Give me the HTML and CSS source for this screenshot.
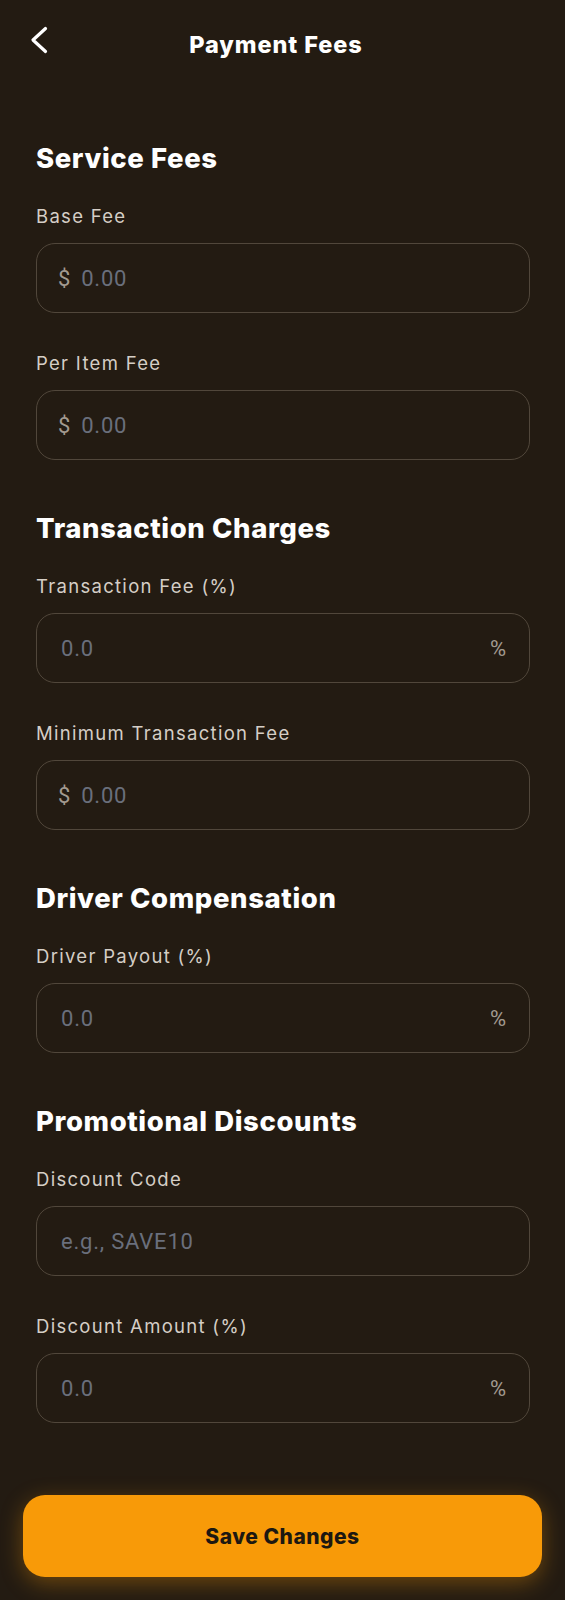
FILE: index.html
```html
<!DOCTYPE html>
<html lang="en">
<head>
<meta charset="utf-8">
<title>Payment Fees</title>
<link rel="stylesheet" href="styles.css">
</head>
<body>
<div class="screen">
  <header class="header">
    <button class="back" aria-label="Back">
      <svg width="20" height="30" viewBox="0 0 20 30"><path d="M15.5 3.5 L3 15 L15.5 26.5" fill="none" stroke="#ffffff" stroke-width="3.2" stroke-linecap="round" stroke-linejoin="round"/></svg>
    </button>
    <h1 class="title">Payment Fees</h1>
  </header>

  <main class="content">
    <section class="section">
      <h2 class="section-title">Service Fees</h2>
      <div class="fields">
        <div class="field">
          <label class="label">Base Fee</label>
          <div class="input input--prefix"><span class="affix">$</span><span class="placeholder">0.00</span></div>
        </div>
        <div class="field">
          <label class="label">Per Item Fee</label>
          <div class="input input--prefix"><span class="affix">$</span><span class="placeholder">0.00</span></div>
        </div>
      </div>
    </section>

    <section class="section">
      <h2 class="section-title">Transaction Charges</h2>
      <div class="fields">
        <div class="field">
          <label class="label">Transaction Fee (%)</label>
          <div class="input input--suffix"><span class="placeholder">0.0</span><span class="affix">%</span></div>
        </div>
        <div class="field">
          <label class="label">Minimum Transaction Fee</label>
          <div class="input input--prefix"><span class="affix">$</span><span class="placeholder">0.00</span></div>
        </div>
      </div>
    </section>

    <section class="section">
      <h2 class="section-title">Driver Compensation</h2>
      <div class="fields">
        <div class="field">
          <label class="label">Driver Payout (%)</label>
          <div class="input input--suffix"><span class="placeholder">0.0</span><span class="affix">%</span></div>
        </div>
      </div>
    </section>

    <section class="section">
      <h2 class="section-title">Promotional Discounts</h2>
      <div class="fields">
        <div class="field">
          <label class="label">Discount Code</label>
          <div class="input"><span class="placeholder">e.g., SAVE10</span></div>
        </div>
        <div class="field">
          <label class="label">Discount Amount (%)</label>
          <div class="input input--suffix"><span class="placeholder">0.0</span><span class="affix">%</span></div>
        </div>
      </div>
    </section>
  </main>

  <footer class="footer">
    <button class="save">Save Changes</button>
  </footer>
</div>
</body>
</html>
```

FILE: styles.css
```css
* { box-sizing: border-box; }

html, body {
  margin: 0;
  padding: 0;
  background: #231b12;
}

body {
  font-family: "Inter", "Noto Sans", sans-serif;
  color: #ffffff;
}

.screen {
  width: 565px;
  min-height: 1600px;
  background: #231b12;
}

.header {
  display: flex;
  align-items: flex-start;
  padding: 25px 31px 0 30px;
  height: 65px;
}

.back {
  width: 20px;
  height: 30px;
  padding: 0;
  margin: 0;
  border: 0;
  background: none;
  display: block;
}

.back svg { display: block; }

.title {
  flex: 1;
  margin: 0 32px 0 0;
  text-align: center;
  font-size: 23.5px;
  line-height: 40px;
  font-weight: 800;
  color: #ffffff;
  letter-spacing: 0.9px;
}

.content {
  padding: 77px 35px 0 36px;
  display: flex;
  flex-direction: column;
  gap: 52px;
}

.section-title {
  margin: 0 0 32px;
  font-size: 27.5px;
  line-height: 32px;
  font-weight: 800;
  color: #ffffff;
  letter-spacing: 0.6px;
}

.fields {
  display: flex;
  flex-direction: column;
  gap: 40px;
}

.field {
  display: flex;
  flex-direction: column;
}

.label {
  font-size: 18.5px;
  line-height: 20px;
  color: #d5cec6;
  margin-bottom: 17px;
  letter-spacing: 1.3px;
}

.input {
  height: 70px;
  border: 1.5px solid #51473b;
  border-radius: 19px;
  display: flex;
  align-items: center;
  padding: 0 24px;
  font-family: "Roboto", "Noto Sans", sans-serif;
  font-size: 22px;
  letter-spacing: 0.8px;
}

.input--prefix { padding-left: 21px; gap: 10px; }

.input--suffix { justify-content: space-between; padding-right: 22px; }

.affix { color: #a29a90; }

.placeholder { color: #6a6f7c; }

.footer {
  margin-top: 72px;
  padding: 0 23px 23px;
}

.save {
  width: 100%;
  height: 82px;
  border: 0;
  border-radius: 22px;
  background: #f89a08;
  color: #1d1811;
  font-family: "Inter", "Noto Sans", sans-serif;
  font-size: 21px;
  font-weight: 800;
  letter-spacing: 0.5px;
  box-shadow: 0 6px 22px rgba(248, 154, 8, 0.35);
}
```
